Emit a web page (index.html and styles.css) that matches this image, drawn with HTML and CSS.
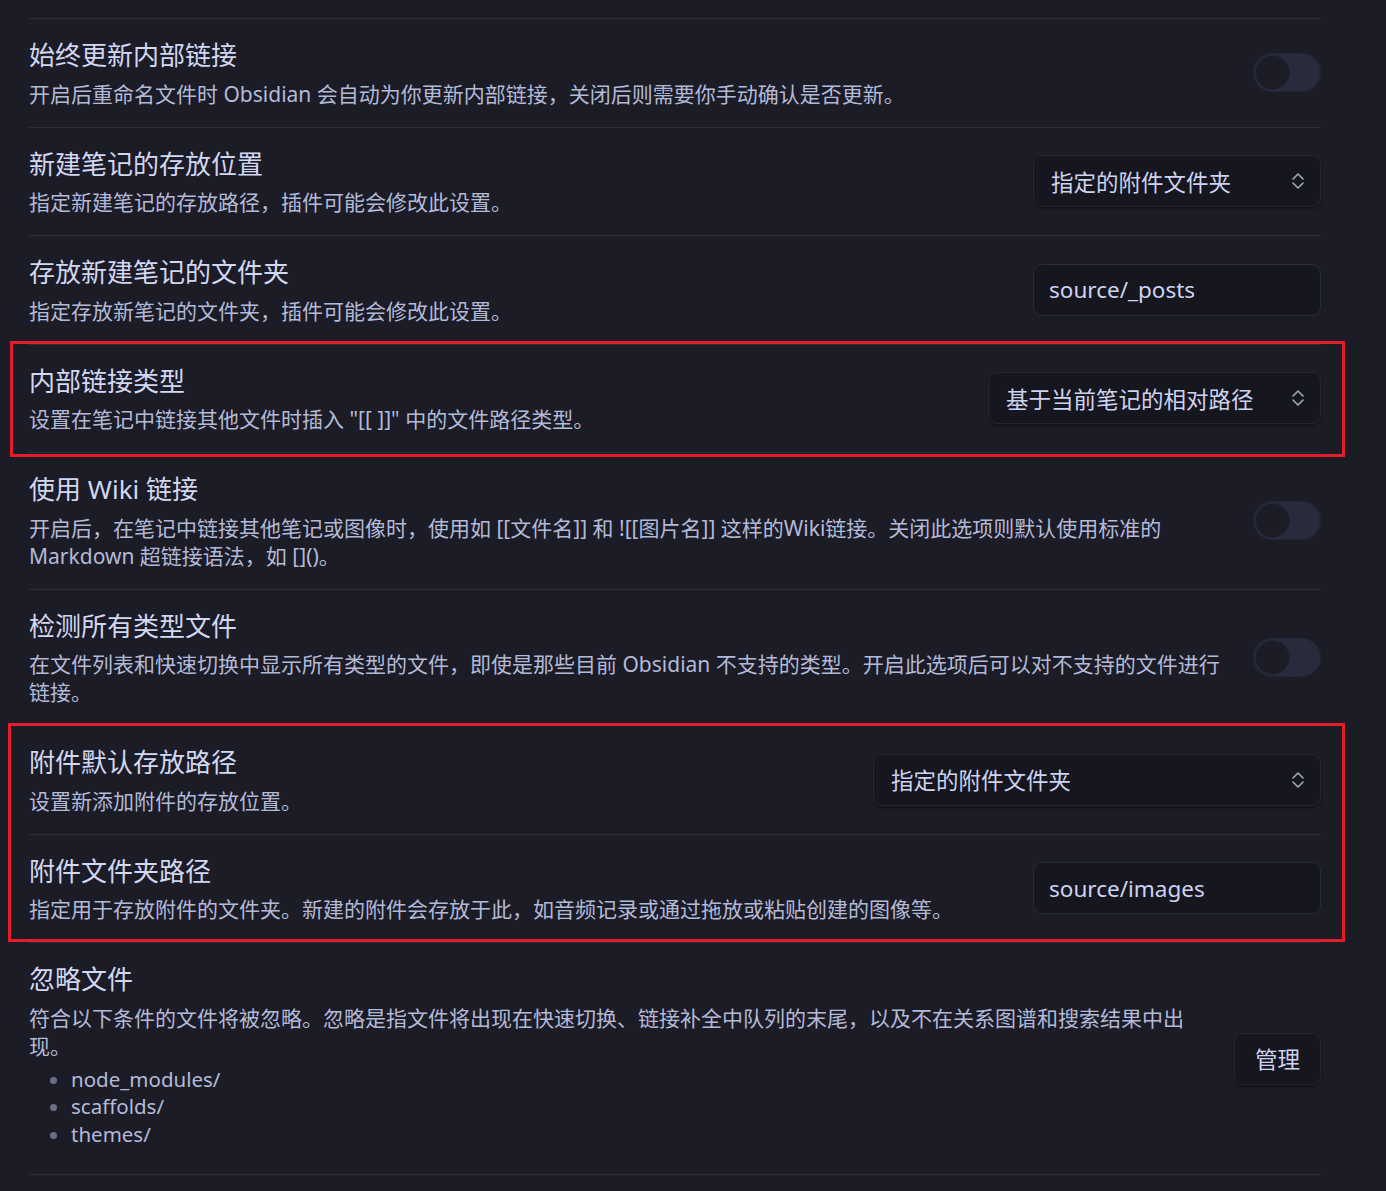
FILE: index.html
```html
<!DOCTYPE html>
<html lang="zh-CN">
<head>
    <meta charset="UTF-8">
    <meta name="viewport" content="width=device-width, initial-scale=1.0">
    <title>文件与链接</title>
    <link rel="stylesheet" href="styles.css">
</head>
<body>
    <div class="settings">
        <div class="setting-item">
            <div class="setting-info">
                <div class="setting-name">始终更新内部链接</div>
                <div class="setting-desc">开启后重命名文件时 Obsidian 会自动为你更新内部链接，关闭后则需要你手动确认是否更新。</div>
            </div>
            <div class="setting-control">
                <div class="toggle"><div class="toggle-knob"></div></div>
            </div>
        </div>

        <div class="setting-item">
            <div class="setting-info">
                <div class="setting-name">新建笔记的存放位置</div>
                <div class="setting-desc">指定新建笔记的存放路径，插件可能会修改此设置。</div>
            </div>
            <div class="setting-control">
                <div class="dropdown dropdown-sm">
                    <span>指定的附件文件夹</span>
                    <svg class="chevrons" width="12" height="18" viewBox="0 0 12 18"><path d="M1 7 L6 2 L11 7 M1 11 L6 16 L11 11"/></svg>
                </div>
            </div>
        </div>

        <div class="setting-item">
            <div class="setting-info">
                <div class="setting-name">存放新建笔记的文件夹</div>
                <div class="setting-desc">指定存放新笔记的文件夹，插件可能会修改此设置。</div>
            </div>
            <div class="setting-control">
                <div class="text-input">source/_posts</div>
            </div>
        </div>

        <div class="highlight highlight-one">
            <div class="setting-item">
                <div class="setting-info">
                    <div class="setting-name">内部链接类型</div>
                    <div class="setting-desc">设置在笔记中链接其他文件时插入 "[[ ]]" 中的文件路径类型。</div>
                </div>
                <div class="setting-control">
                    <div class="dropdown dropdown-md">
                        <span>基于当前笔记的相对路径</span>
                        <svg class="chevrons" width="12" height="18" viewBox="0 0 12 18"><path d="M1 7 L6 2 L11 7 M1 11 L6 16 L11 11"/></svg>
                    </div>
                </div>
            </div>
        </div>

        <div class="setting-item">
            <div class="setting-info">
                <div class="setting-name">使用 Wiki 链接</div>
                <div class="setting-desc">开启后，在笔记中链接其他笔记或图像时，使用如 [[文件名]] 和 ![[图片名]] 这样的Wiki链接。关闭此选项则默认使用标准的 Markdown 超链接语法，如 []()。</div>
            </div>
            <div class="setting-control">
                <div class="toggle"><div class="toggle-knob"></div></div>
            </div>
        </div>

        <div class="setting-item">
            <div class="setting-info">
                <div class="setting-name">检测所有类型文件</div>
                <div class="setting-desc">在文件列表和快速切换中显示所有类型的文件，即使是那些目前 Obsidian 不支持的类型。开启此选项后可以对不支持的文件进行链接。</div>
            </div>
            <div class="setting-control">
                <div class="toggle"><div class="toggle-knob"></div></div>
            </div>
        </div>

        <div class="highlight highlight-two">
            <div class="setting-item">
                <div class="setting-info">
                    <div class="setting-name">附件默认存放路径</div>
                    <div class="setting-desc">设置新添加附件的存放位置。</div>
                </div>
                <div class="setting-control">
                    <div class="dropdown dropdown-lg">
                        <span>指定的附件文件夹</span>
                        <svg class="chevrons" width="12" height="18" viewBox="0 0 12 18"><path d="M1 7 L6 2 L11 7 M1 11 L6 16 L11 11"/></svg>
                    </div>
                </div>
            </div>

            <div class="setting-item">
                <div class="setting-info">
                    <div class="setting-name">附件文件夹路径</div>
                    <div class="setting-desc">指定用于存放附件的文件夹。新建的附件会存放于此，如音频记录或通过拖放或粘贴创建的图像等。</div>
                </div>
                <div class="setting-control">
                    <div class="text-input">source/images</div>
                </div>
            </div>
        </div>

        <div class="setting-item setting-last">
            <div class="setting-info">
                <div class="setting-name">忽略文件</div>
                <div class="setting-desc">符合以下条件的文件将被忽略。忽略是指文件将出现在快速切换、链接补全中队列的末尾，以及不在关系图谱和搜索结果中出现。</div>
                <ul class="ignore-list">
                    <li>node_modules/</li>
                    <li>scaffolds/</li>
                    <li>themes/</li>
                </ul>
            </div>
            <div class="setting-control">
                <button class="btn">管理</button>
            </div>
        </div>
    </div>
</body>
</html>
```

FILE: styles.css
```css
/* General */
body {
    margin: 0;
    background: #1c1c27;
    color: #cdd3f0;
    font-family: "Noto Sans", "Noto Sans CJK SC", sans-serif;
}

.settings {
    margin: 0 65px 0 29px;
    padding-top: 18px;
}

/* Setting rows */
.setting-item {
    display: flex;
    align-items: center;
    padding: 19px 0;
    border-top: 1px solid #2c2c3b;
}

.setting-last {
    border-bottom: 1px solid #2c2c3b;
}

.setting-info {
    flex: 1;
    min-width: 0;
    margin-right: 31px;
}

.setting-name {
    font-size: 26px;
    line-height: 35.5px;
    color: #d2d7f2;
}

.setting-desc {
    margin-top: 6px;
    font-size: 21px;
    line-height: 28px;
    color: #b3bad8;
}

.setting-control {
    flex-shrink: 0;
    display: flex;
    justify-content: flex-end;
}

/* Ignore list */
.ignore-list {
    margin: 6px 0 7px;
    padding-left: 42px;
    font-size: 20.5px;
    line-height: 27.5px;
    color: #b3bad8;
}

.ignore-list li::marker {
    color: #6b6f86;
}

/* Toggle */
.toggle {
    width: 68px;
    height: 39px;
    border-radius: 20px;
    background: #282b3c;
    box-shadow: inset 0 0 0 1px #232536;
    display: flex;
    align-items: center;
    padding: 0 3px;
    box-sizing: border-box;
}

.toggle-knob {
    width: 33px;
    height: 33px;
    border-radius: 50%;
    background: #1c1c27;
    box-shadow: 0 0 0 1px #242636;
}

/* Dropdown and text input */
.dropdown,
.text-input {
    height: 52px;
    box-sizing: border-box;
    border-radius: 9px;
    background: #16161f;
    font-size: 22.5px;
    color: #cdd3f0;
    display: flex;
    align-items: center;
}

.dropdown {
    justify-content: space-between;
    padding: 0 16px 0 17px;
    border: 1px solid #262633;
    box-shadow: 0 2px 3px rgba(0, 0, 0, 0.35);
}

.dropdown-sm { width: 288px; }
.dropdown-md { width: 333px; }
.dropdown-lg { width: 448px; }

.chevrons {
    fill: none;
    stroke: #a5a8bb;
    stroke-width: 1.6;
    stroke-linecap: round;
    stroke-linejoin: round;
}

.text-input {
    width: 288px;
    padding: 0 15px;
    border: 1px solid #2a2b3b;
}

/* Button */
.btn {
    height: 52px;
    padding: 0 20px;
    border-radius: 9px;
    border: 1px solid #262633;
    background: #16161f;
    color: #cdd3f0;
    font-family: inherit;
    font-size: 22.5px;
    box-shadow: 0 2px 3px rgba(0, 0, 0, 0.35);
    cursor: pointer;
}

/* Red annotation boxes */
.highlight {
    position: relative;
}

.highlight::after {
    content: "";
    position: absolute;
    left: -19px;
    right: -24px;
    border: 3px solid #e41d2a;
    pointer-events: none;
}

.highlight-one::after {
    top: -3px;
    bottom: -5px;
}

.highlight-two::after {
    left: -21px;
    top: -2px;
    bottom: 0;
}
```
